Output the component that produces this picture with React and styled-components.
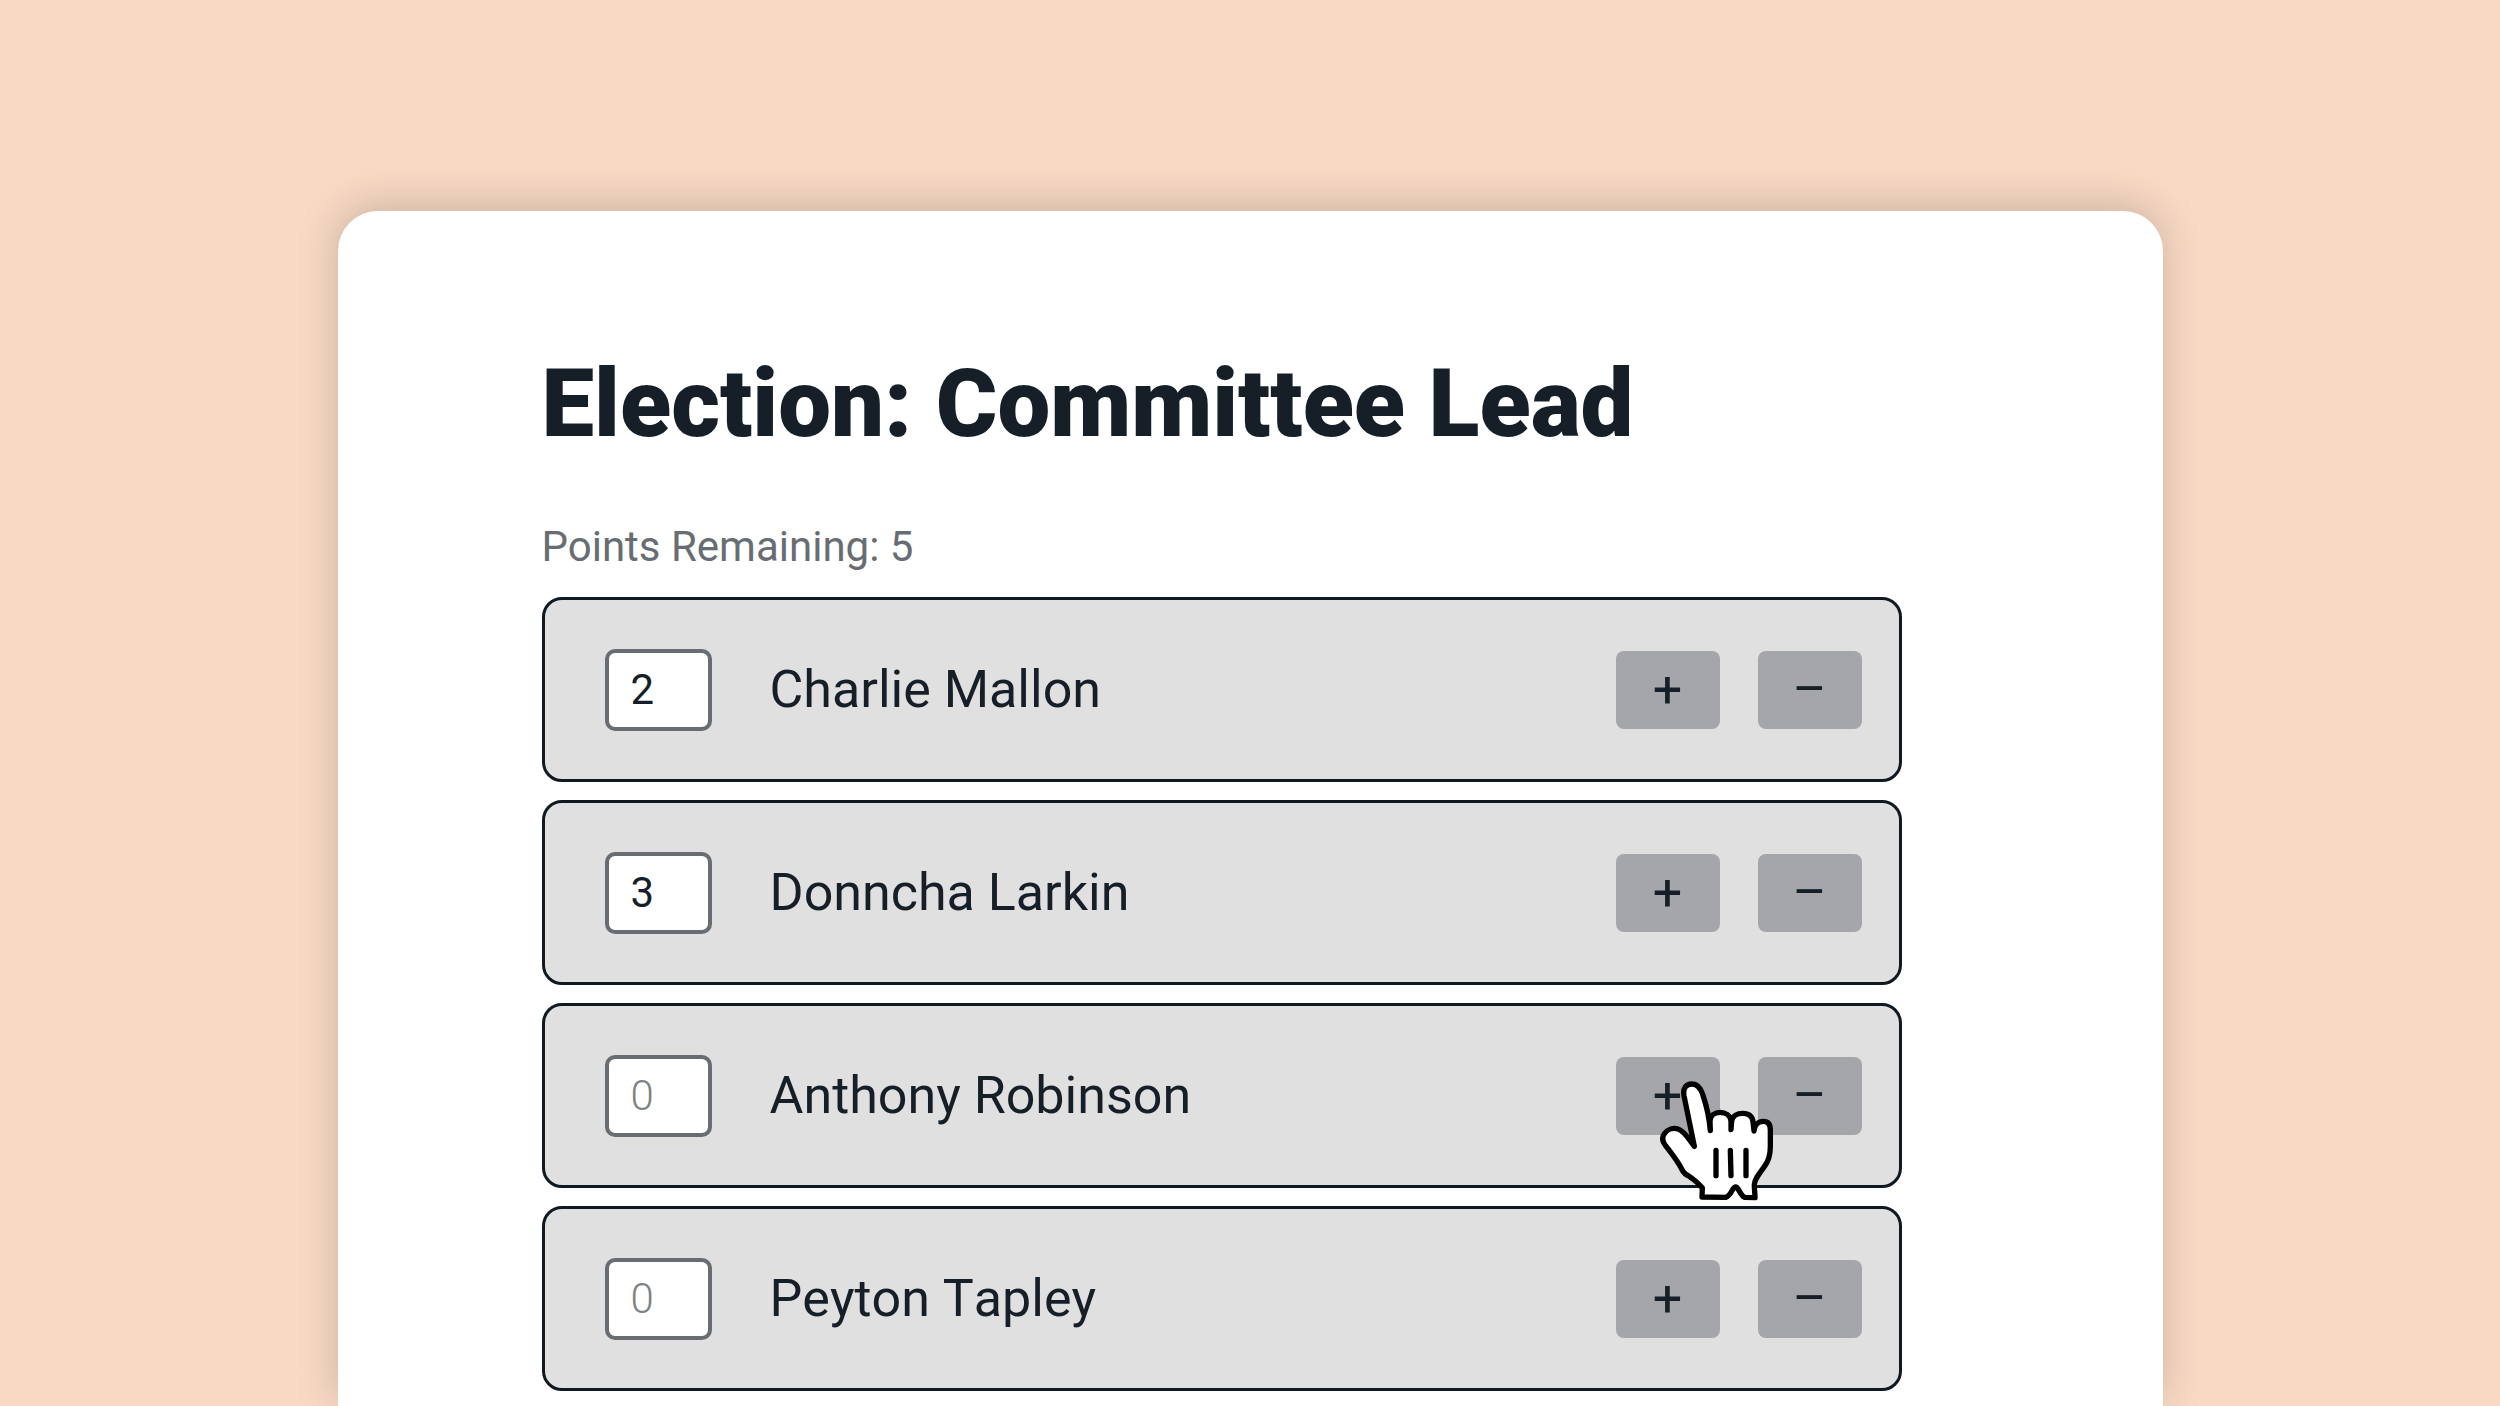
import React, { useState } from "react";
import styled, { createGlobalStyle } from "styled-components";

const GlobalStyle = createGlobalStyle`
    * {
        box-sizing: border-box;
    }

    body {
        margin: 0;
        background: #f7d9c4;
        color: #161f27;
        font-family: Roboto, "Liberation Sans", sans-serif;
    }
`

const Page = styled.div`
    display: flex;
    justify-content: center;
    min-height: 100vh;
    padding-top: 211px;
    overflow: hidden;
`

const Ballot = styled.main`
    width: 73%;
    padding: 137px 261px 15px 204px;
    border-radius: 40px 40px 0 0;
    background: #fff;
    box-shadow: -1px -6px 40px rgba(40, 20, 10, 0.19);
`

const Title = styled.h1`
    margin: 0 0 62px;
    font-size: 94px;
    line-height: 112px;
    font-weight: 900;
`

const Remaining = styled.p`
    margin: 0 0 25px;
    color: #676d72;
    font-size: 42px;
    line-height: 50px;
`

const Candidates = styled.ul`
    display: flex;
    flex-direction: column;
    gap: 18px;
    margin: 0;
    padding: 0;
    list-style: none;
`

const CandidateRow = styled.li`
    display: flex;
    align-items: center;
    height: 185px;
    padding: 0 37px 0 60px;
    border: 3px solid #101922;
    border-radius: 20px;
    background: #e0e0e0;
`

const PointsInput = styled.input`
    width: 107px;
    height: 82px;
    padding: 0 22px;
    border: 4px solid #676d72;
    border-radius: 10px;
    background: #fff;
    color: #161f27;
    font-family: inherit;
    font-size: 42px;

    &::placeholder {
        color: #7d8286;
        font-weight: 300;
        opacity: 1;
    }
`

const Name = styled.label`
    flex: 1;
    margin-left: 58px;
    font-size: 52px;
    line-height: 60px;
    font-kerning: none;
`

const Actions = styled.div`
    display: flex;
    gap: 38px;
`

const StepButton = styled.button`
    position: relative;
    width: 104px;
    height: 78px;
    padding: 0;
    border: 0;
    border-radius: 8px;
    background: #a5a6aa;
    color: #161f27;
    font-family: inherit;
    font-size: 52px;
    line-height: 78px;
`

const Pointer = styled.svg`
    position: absolute;
    z-index: 1;
    top: 24px;
    left: 44px;
    width: 114px;
    height: 120px;
    pointer-events: none;
`

const candidates = [
    { id: "charlie", name: "Charlie Mallon", points: 2 },
    { id: "donncha", name: "Donncha Larkin", points: 3 },
    { id: "anthony", name: "Anthony Robinson", points: 0, hovered: true },
    { id: "peyton", name: "Peyton Tapley", points: 0 },
]

const TOTAL = 10

function HandPointer(){
    return(
        <Pointer viewBox="180 120 342 360" aria-hidden="true">
            <g stroke="#000" strokeWidth="16" strokeLinecap="round" strokeLinejoin="round">
                <path
                    fill="#fff"
                    d="M283 316 L252 164 C248 140 259 129 276 129 C293 129 302 142 308 160 C319 192 327 222 331 269 L330 240 C331 223 345 214 360 214 C377 214 391 223 393 240 L393 266 L395 240 C398 224 412 217 428 217 C446 217 457 226 459 242 L462 270 C464 250 476 241 490 241 C505 241 511 250 511 266 L511 318 C511 346 505 361 493 377 C478 397 462 417 463 432 C463 446 465 458 465 470 L434 469 C420 463 416 438 407 438 C397 438 394 463 378 469 L306 468 L307 441 C296 427 278 413 268 406 C252 400 249 392 244 382 C230 356 212 334 196 313 C187 302 186 289 193 278 C202 265 219 260 234 264 C254 270 267 296 283 316 Z"
                />
                <path fill="none" d="M348 328 V404 M391 328 L393 404 M438 328 V404" />
            </g>
        </Pointer>
    )
}

function Candidate(props){
    const inputId = "points-" + props.id

    return(
        <CandidateRow>
            <PointsInput
                id={inputId}
                inputMode="numeric"
                placeholder="0"
                value={props.points || ""}
                onChange={(e) => props.onChange(Number(e.target.value) || 0)}
            />
            <Name htmlFor={inputId}>{props.name}</Name>
            <Actions>
                <StepButton type="button" onClick={() => props.onChange(props.points + 1)}>
                    +
                    {props.hovered && <HandPointer />}
                </StepButton>
                <StepButton type="button" onClick={() => props.onChange(props.points - 1)}>
                    –
                </StepButton>
            </Actions>
        </CandidateRow>
    )
}

export default function App(){
    const [votes, setVotes] = useState(candidates)
    const used = votes.reduce((sum, vote) => sum + vote.points, 0)

    const changePoints = (id, points) => {
        const next = votes.map((vote) => vote.id === id ? { ...vote, points } : vote)
        const sum = next.reduce((acc, vote) => acc + vote.points, 0)
        if (points >= 0 && sum <= TOTAL) {
            setVotes(next)
        }
    }

    return(
        <>
            <GlobalStyle />
            <Page>
                <Ballot>
                    <Title>Election: Committee Lead</Title>
                    <Remaining>Points Remaining: {TOTAL - used}</Remaining>
                    <Candidates>
                        {votes.map((vote) => (
                            <Candidate
                                key={vote.id}
                                {...vote}
                                onChange={(points) => changePoints(vote.id, points)}
                            />
                        ))}
                    </Candidates>
                </Ballot>
            </Page>
        </>
    )
}
